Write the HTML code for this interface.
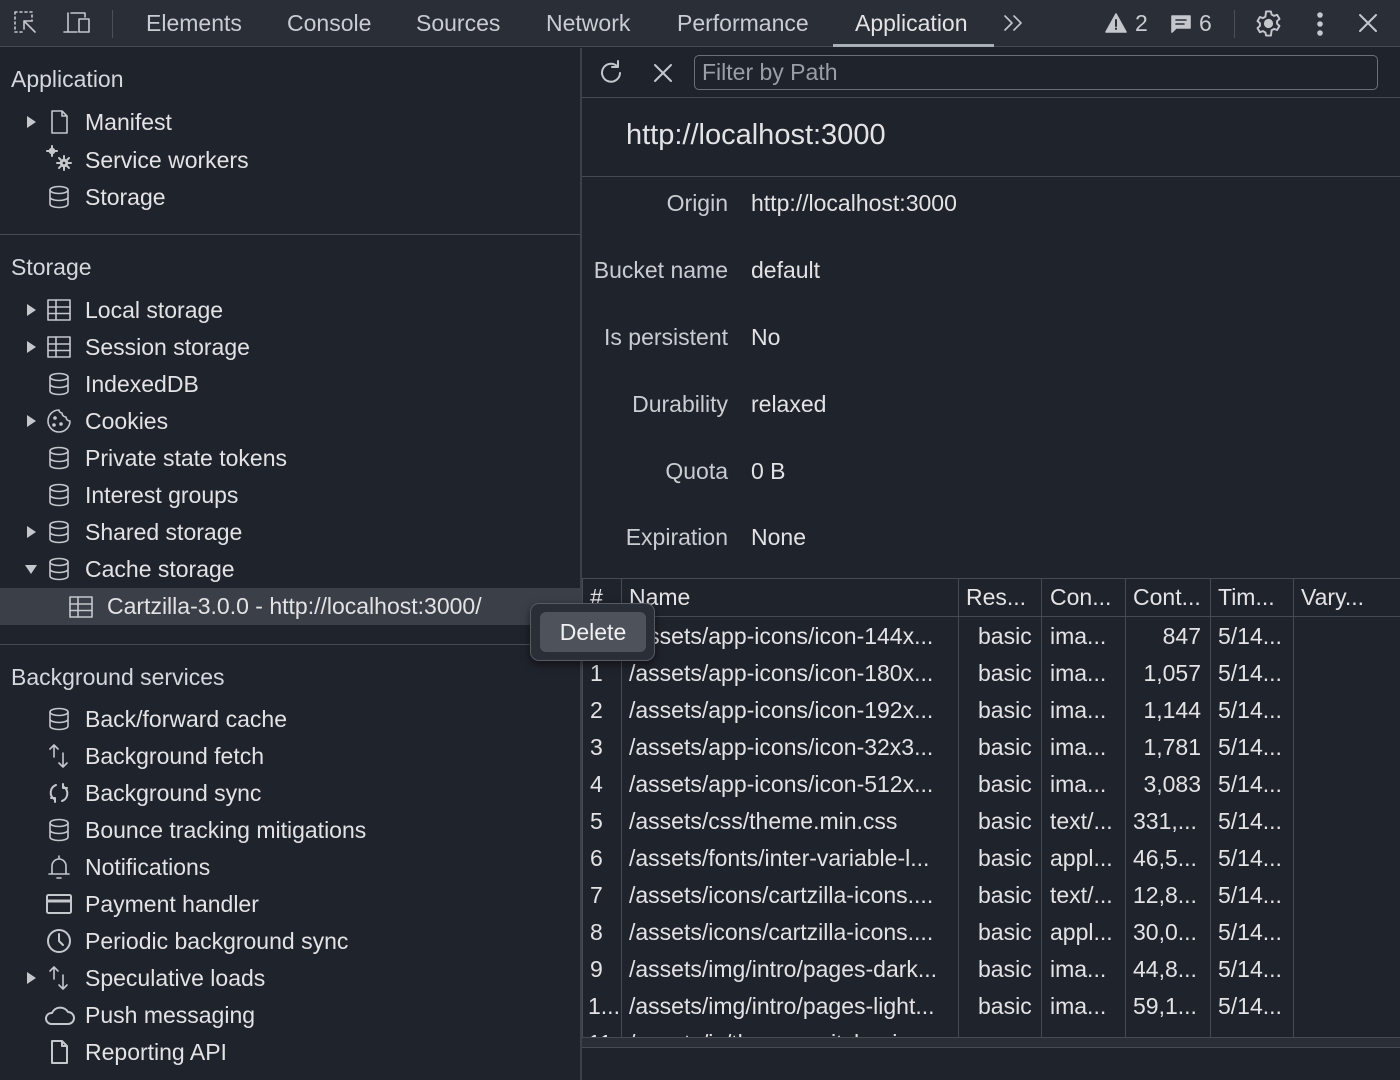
<!DOCTYPE html>
<html><head><meta charset="utf-8"><style>
*{box-sizing:border-box;margin:0;padding:0}
body{width:1400px;height:1080px;background:#1f232b;color:#e3e3e6;font-family:"Liberation Sans",sans-serif;font-size:23px;position:relative;overflow:hidden}
.a{position:absolute;white-space:nowrap}
svg{fill:none;stroke:#c4c7cc;stroke-width:1.6;stroke-linecap:round;stroke-linejoin:round}
.tb{position:absolute;left:0;top:0;width:1400px;height:47px;background:#2a2e37;border-bottom:1px solid #454a53}
.tab{position:absolute;top:0;height:47px;line-height:46px;color:#c9ccd1;white-space:nowrap}
.it{position:absolute;height:30px;line-height:30px;left:85px;white-space:nowrap}
.ic{position:absolute;left:46px;width:26px;height:26px}
.tri{position:absolute;left:27px;width:0;height:0;border-top:6px solid transparent;border-bottom:6px solid transparent;border-left:9px solid #c4c7cc}
.sec{position:absolute;left:11px;color:#d4d7dc;white-space:nowrap}
.hl{position:absolute;left:0;width:580px;height:1px;background:#454a53}
.k{position:absolute;right:672px;color:#c9ccd1;white-space:nowrap}
.v{position:absolute;left:751px;white-space:nowrap}
.vl{position:absolute;width:1px;background:#454a53}
.r{position:absolute;height:37px;line-height:37px;white-space:nowrap;overflow:hidden}
.n{width:325px}
</style></head><body>
<div class="tb"></div>
<svg class="a" style="left:12px;top:9px" width="28" height="28" viewBox="0 0 28 28"><path d="M3 3h2M8 3h2M13 3h2M18 3h2M3 3v2M3 8v2M3 13v2M3 18v2M3 23h2M8 23h2M20 6v2M20 11v1" /><path d="M12 12l11 11M12 12v8M12 12h8"/></svg>
<svg class="a" style="left:62px;top:9px" width="32" height="28" viewBox="0 0 32 28"><path d="M6 4v19M2 23h13M9 4h14v4M17 10h10v13h-10z"/></svg>
<div class="a" style="left:112px;top:10px;width:1px;height:28px;background:#4a4f58"></div>
<div class="tab" style="left:146px">Elements</div>
<div class="tab" style="left:287px">Console</div>
<div class="tab" style="left:416px">Sources</div>
<div class="tab" style="left:546px">Network</div>
<div class="tab" style="left:677px">Performance</div>
<div class="tab" style="left:855px;color:#e3e3e6">Application</div>
<div class="a" style="left:833px;top:44px;width:161px;height:3px;background:#aab0b8"></div>
<svg class="a" style="left:1002px;top:13px" width="24" height="20" viewBox="0 0 24 20"><path d="M3 3l7 7-7 7M12 3l7 7-7 7"/></svg>
<svg class="a" style="left:1104px;top:12px" width="24" height="22" viewBox="0 0 24 22"><path d="M12 2L22 20H2z" fill="#c4c7cc"/><path d="M12 8v6M12 16.5v.5" stroke="#2a2e37" stroke-width="2"/></svg>
<div class="tab" style="left:1135px">2</div>
<svg class="a" style="left:1170px;top:14px" width="22" height="20" viewBox="0 0 22 20"><path d="M2 2h18v12H6l-4 4z" fill="#c4c7cc"/><path d="M6 6h10M6 10h8" stroke="#2a2e37" stroke-width="1.6"/></svg>
<div class="tab" style="left:1199px">6</div>
<div class="a" style="left:1234px;top:10px;width:1px;height:28px;background:#4a4f58"></div>
<svg class="a" style="left:1254px;top:9px" width="29" height="29" viewBox="0 0 24 24"><circle cx="12" cy="12" r="3" fill="#c4c7cc"/><path d="M10 2h4l.6 2.6 2 1.1 2.5-.9 2 3.4-2 1.8v2.2l2 1.8-2 3.4-2.5-.9-2 1.1L14 22h-4l-.6-2.6-2-1.1-2.5.9-2-3.4 2-1.8v-2.2l-2-1.8 2-3.4 2.5.9 2-1.1z"/></svg>
<svg class="a" style="left:1310px;top:10px" width="20" height="28" viewBox="0 0 20 28"><circle cx="10" cy="5" r="2" fill="#c4c7cc"/><circle cx="10" cy="14" r="2" fill="#c4c7cc"/><circle cx="10" cy="23" r="2" fill="#c4c7cc"/></svg>
<svg class="a" style="left:1356px;top:11px" width="24" height="24" viewBox="0 0 24 24"><path d="M4 4l16 16M20 4L4 20" stroke-width="2"/></svg>

<!-- left -->
<div class="a" style="left:580px;top:48px;width:2px;height:1032px;background:#3c4049"></div>
<div class="sec" style="top:66px">Application</div>
<div class="tri" style="top:116px"></div>
<svg class="ic" style="top:109px" viewBox="0 0 26 26"><path d="M6 2h10l5 5v17H6z M16 2v5h5"/></svg>
<div class="it" style="top:107px">Manifest</div>
<svg class="ic" style="top:145px" viewBox="0 0 26 26"><circle cx="6" cy="6" r="2.5" fill="#c4c7cc"/><circle cx="18" cy="18" r="3.5" fill="#c4c7cc"/><circle cx="18" cy="18" r="1.3" fill="#1f232b" stroke="none"/><path d="M6 1v2M6 9v2M1 6h2M9 6h2M18 11v3M18 22v3M11 18h3M22 18h3M13 13l2 2M21 21l2 2M23 13l-2 2M13 23l2-2" stroke-width="2"/></svg>
<div class="it" style="top:145px">Service workers</div>
<svg class="ic" style="top:184px" viewBox="0 0 26 26"><ellipse cx="13" cy="6" rx="9" ry="3.5"/><path d="M4 6v14c0 2 4 3.5 9 3.5s9-1.5 9-3.5V6M4 13c0 2 4 3.5 9 3.5s9-1.5 9-3.5"/></svg>
<div class="it" style="top:182px">Storage</div>
<div class="hl" style="top:234px"></div>
<div class="sec" style="top:254px">Storage</div>

<div class="tri" style="top:304px"></div>
<svg class="ic" style="top:297px" viewBox="0 0 26 26"><rect x="2" y="3" width="22" height="20"/><path d="M2 10h22M2 16.5h22M10 3v20"/></svg>
<div class="it" style="top:295px">Local storage</div>
<div class="tri" style="top:341px"></div>
<svg class="ic" style="top:334px" viewBox="0 0 26 26"><rect x="2" y="3" width="22" height="20"/><path d="M2 10h22M2 16.5h22M10 3v20"/></svg>
<div class="it" style="top:332px">Session storage</div>
<svg class="ic" style="top:371px" viewBox="0 0 26 26"><ellipse cx="13" cy="6" rx="9" ry="3.5"/><path d="M4 6v14c0 2 4 3.5 9 3.5s9-1.5 9-3.5V6M4 13c0 2 4 3.5 9 3.5s9-1.5 9-3.5"/></svg>
<div class="it" style="top:369px">IndexedDB</div>
<div class="tri" style="top:415px"></div>
<svg class="ic" style="top:408px" viewBox="0 0 26 26"><path d="M13 2a11 11 0 1 0 11 11 4 4 0 0 1-4-4 4 4 0 0 1-4-4 3 3 0 0 1-3-3z"/><circle cx="9" cy="10" r="1" fill="#c4c7cc"/><circle cx="15" cy="16" r="1" fill="#c4c7cc"/><circle cx="8" cy="17" r="1" fill="#c4c7cc"/></svg>
<div class="it" style="top:406px">Cookies</div>
<svg class="ic" style="top:445px" viewBox="0 0 26 26"><ellipse cx="13" cy="6" rx="9" ry="3.5"/><path d="M4 6v14c0 2 4 3.5 9 3.5s9-1.5 9-3.5V6M4 13c0 2 4 3.5 9 3.5s9-1.5 9-3.5"/></svg>
<div class="it" style="top:443px">Private state tokens</div>
<svg class="ic" style="top:482px" viewBox="0 0 26 26"><ellipse cx="13" cy="6" rx="9" ry="3.5"/><path d="M4 6v14c0 2 4 3.5 9 3.5s9-1.5 9-3.5V6M4 13c0 2 4 3.5 9 3.5s9-1.5 9-3.5"/></svg>
<div class="it" style="top:480px">Interest groups</div>
<div class="tri" style="top:526px"></div>
<svg class="ic" style="top:519px" viewBox="0 0 26 26"><ellipse cx="13" cy="6" rx="9" ry="3.5"/><path d="M4 6v14c0 2 4 3.5 9 3.5s9-1.5 9-3.5V6M4 13c0 2 4 3.5 9 3.5s9-1.5 9-3.5"/></svg>
<div class="it" style="top:517px">Shared storage</div>
<div class="a" style="left:25px;top:565px;width:0;height:0;border-left:6px solid transparent;border-right:6px solid transparent;border-top:9px solid #c4c7cc"></div>
<svg class="ic" style="top:556px" viewBox="0 0 26 26"><ellipse cx="13" cy="6" rx="9" ry="3.5"/><path d="M4 6v14c0 2 4 3.5 9 3.5s9-1.5 9-3.5V6M4 13c0 2 4 3.5 9 3.5s9-1.5 9-3.5"/></svg>
<div class="it" style="top:554px">Cache storage</div>
<div class="a" style="left:0;top:588px;width:580px;height:37px;background:#3b3f47"></div>
<svg class="ic" style="top:594px;left:68px" viewBox="0 0 26 26"><rect x="2" y="3" width="22" height="20"/><path d="M2 10h22M2 16.5h22M10 3v20"/></svg>
<div class="it" style="top:591px;left:107px">Cartzilla-3.0.0 - http://localhost:3000/</div>
<div class="hl" style="top:644px"></div>
<div class="sec" style="top:664px">Background services</div>
<svg class="ic" style="top:706px" viewBox="0 0 26 26"><ellipse cx="13" cy="6" rx="9" ry="3.5"/><path d="M4 6v14c0 2 4 3.5 9 3.5s9-1.5 9-3.5V6M4 13c0 2 4 3.5 9 3.5s9-1.5 9-3.5"/></svg>
<div class="it" style="top:704px">Back/forward cache</div>
<svg class="ic" style="top:743px" viewBox="0 0 26 26"><path d="M8 2v12M4 6l4-4 4 4M17 10v14M13 20l4 4 4-4"/></svg>
<div class="it" style="top:741px">Background fetch</div>
<svg class="ic" style="top:780px" viewBox="0 0 26 26"><path d="M10 5a8 8 0 0 0-2 14M16 21a8 8 0 0 0 2-14M5 18h4v4M21 8h-4V4" stroke-width="2"/></svg>
<div class="it" style="top:778px">Background sync</div>
<svg class="ic" style="top:817px" viewBox="0 0 26 26"><ellipse cx="13" cy="6" rx="9" ry="3.5"/><path d="M4 6v14c0 2 4 3.5 9 3.5s9-1.5 9-3.5V6M4 13c0 2 4 3.5 9 3.5s9-1.5 9-3.5"/></svg>
<div class="it" style="top:815px">Bounce tracking mitigations</div>
<svg class="ic" style="top:854px" viewBox="0 0 26 26"><path d="M13 2v2M6 20V12a7 7 0 0 1 14 0v8M3 20h20M11 24h4"/></svg>
<div class="it" style="top:852px">Notifications</div>
<svg class="ic" style="top:891px" viewBox="0 0 26 26"><rect x="1" y="4" width="24" height="18" rx="1.5" stroke-width="2"/><path d="M1 10h24" stroke-width="3"/></svg>
<div class="it" style="top:889px">Payment handler</div>
<svg class="ic" style="top:928px" viewBox="0 0 26 26"><circle cx="13" cy="13" r="11" stroke-width="2"/><path d="M13 6v7l4 4" stroke-width="2"/></svg>
<div class="it" style="top:926px">Periodic background sync</div>
<div class="tri" style="top:972px"></div>
<svg class="ic" style="top:965px" viewBox="0 0 26 26"><path d="M8 2v12M4 6l4-4 4 4M17 10v14M13 20l4 4 4-4"/></svg>
<div class="it" style="top:963px">Speculative loads</div>
<svg class="ic" style="top:1002px;left:42px;width:34px" viewBox="0 0 34 26"><path d="M9 22h17a6 6 0 0 0 0-12 9 9 0 0 0-16 1 5.5 5.5 0 0 0-1 11z" stroke-width="2"/></svg>
<div class="it" style="top:1000px">Push messaging</div>
<svg class="ic" style="top:1039px" viewBox="0 0 26 26"><path d="M6 2h10l5 5v17H6z M16 2v5h5" stroke-width="2"/></svg>
<div class="it" style="top:1037px">Reporting API</div>

<!-- right -->
<svg class="a" style="left:597px;top:59px" width="28" height="28" viewBox="0 0 28 28"><path d="M23 14a9 9 0 1 1-3-7M21 2v6h-6" stroke-width="2"/></svg>
<svg class="a" style="left:652px;top:62px" width="22" height="22" viewBox="0 0 22 22"><path d="M3 3l16 16M19 3L3 19" stroke-width="2"/></svg>
<div class="a" style="left:694px;top:55px;width:684px;height:35px;border:1.5px solid #6a6f78;border-radius:5px;padding-left:7px;line-height:33px;color:#9a9ea5">Filter by Path</div>
<div class="a" style="left:582px;top:97px;width:818px;height:1px;background:#454a53"></div>
<div class="a" style="left:626px;top:119px;font-size:29px">http://localhost:3000</div>
<div class="a" style="left:582px;top:176px;width:818px;height:1px;background:#454a53"></div>
<div class="k" style="top:190px">Origin</div><div class="v" style="top:190px">http://localhost:3000</div>
<div class="k" style="top:257px">Bucket name</div><div class="v" style="top:257px">default</div>
<div class="k" style="top:324px">Is persistent</div><div class="v" style="top:324px">No</div>
<div class="k" style="top:391px">Durability</div><div class="v" style="top:391px">relaxed</div>
<div class="k" style="top:458px">Quota</div><div class="v" style="top:458px">0 B</div>
<div class="k" style="top:524px">Expiration</div><div class="v" style="top:524px">None</div>

<div class="a" style="left:582px;top:578px;width:818px;height:1px;background:#454a53"></div>
<div class="a" style="left:582px;top:616px;width:818px;height:1px;background:#454a53"></div>
<div class="vl" style="left:582px;top:578px;height:460px"></div>
<div class="vl" style="left:621px;top:578px;height:460px"></div>
<div class="vl" style="left:958px;top:578px;height:460px"></div>
<div class="vl" style="left:1041px;top:578px;height:460px"></div>
<div class="vl" style="left:1125px;top:578px;height:460px"></div>
<div class="vl" style="left:1210px;top:578px;height:460px"></div>
<div class="vl" style="left:1293px;top:578px;height:460px"></div>
<div class="a" style="left:582px;top:1037px;width:818px;height:11px;background:#2a2e37;border-top:1px solid #454a53;border-bottom:1px solid #454a53"></div>
<div class="r" style="top:579px;left:590px">#</div>
<div class="r" style="top:579px;left:629px">Name</div>
<div class="r" style="top:579px;left:966px">Res...</div>
<div class="r" style="top:579px;left:1050px">Con...</div>
<div class="r" style="top:579px;left:1133px">Cont...</div>
<div class="r" style="top:579px;left:1218px">Tim...</div>
<div class="r" style="top:579px;left:1301px">Vary...</div>

<div style="position:absolute;left:0;top:0;width:1400px;height:1037px;overflow:hidden">
<div class="r n" style="top:618px;left:629px">/assets/app-icons/icon-144x...</div>
<div class="r" style="top:655px;left:590px">1</div><div class="r n" style="top:655px;left:629px">/assets/app-icons/icon-180x...</div>
<div class="r" style="top:692px;left:590px">2</div><div class="r n" style="top:692px;left:629px">/assets/app-icons/icon-192x...</div>
<div class="r" style="top:729px;left:590px">3</div><div class="r n" style="top:729px;left:629px">/assets/app-icons/icon-32x3...</div>
<div class="r" style="top:766px;left:590px">4</div><div class="r n" style="top:766px;left:629px">/assets/app-icons/icon-512x...</div>
<div class="r" style="top:803px;left:590px">5</div><div class="r n" style="top:803px;left:629px">/assets/css/theme.min.css</div>
<div class="r" style="top:840px;left:590px">6</div><div class="r n" style="top:840px;left:629px">/assets/fonts/inter-variable-l...</div>
<div class="r" style="top:877px;left:590px">7</div><div class="r n" style="top:877px;left:629px">/assets/icons/cartzilla-icons....</div>
<div class="r" style="top:914px;left:590px">8</div><div class="r n" style="top:914px;left:629px">/assets/icons/cartzilla-icons....</div>
<div class="r" style="top:951px;left:590px">9</div><div class="r n" style="top:951px;left:629px">/assets/img/intro/pages-dark...</div>
<div class="r" style="top:988px;left:588px">1...</div><div class="r n" style="top:988px;left:629px">/assets/img/intro/pages-light...</div>
<div class="r" style="top:1025px;left:588px">11</div><div class="r n" style="top:1025px;left:629px">/assets/js/theme-switcher.js</div>
<div class="r" style="top:618px;left:978px">basic</div><div class="r" style="top:618px;left:1050px">ima...</div><div class="r" style="top:618px;left:1133px;width:68px;text-align:right">847</div><div class="r" style="top:618px;left:1218px">5/14...</div>
<div class="r" style="top:655px;left:978px">basic</div><div class="r" style="top:655px;left:1050px">ima...</div><div class="r" style="top:655px;left:1133px;width:68px;text-align:right">1,057</div><div class="r" style="top:655px;left:1218px">5/14...</div>
<div class="r" style="top:692px;left:978px">basic</div><div class="r" style="top:692px;left:1050px">ima...</div><div class="r" style="top:692px;left:1133px;width:68px;text-align:right">1,144</div><div class="r" style="top:692px;left:1218px">5/14...</div>
<div class="r" style="top:729px;left:978px">basic</div><div class="r" style="top:729px;left:1050px">ima...</div><div class="r" style="top:729px;left:1133px;width:68px;text-align:right">1,781</div><div class="r" style="top:729px;left:1218px">5/14...</div>
<div class="r" style="top:766px;left:978px">basic</div><div class="r" style="top:766px;left:1050px">ima...</div><div class="r" style="top:766px;left:1133px;width:68px;text-align:right">3,083</div><div class="r" style="top:766px;left:1218px">5/14...</div>
<div class="r" style="top:803px;left:978px">basic</div><div class="r" style="top:803px;left:1050px">text/...</div><div class="r" style="top:803px;left:1133px">331,...</div><div class="r" style="top:803px;left:1218px">5/14...</div>
<div class="r" style="top:840px;left:978px">basic</div><div class="r" style="top:840px;left:1050px">appl...</div><div class="r" style="top:840px;left:1133px">46,5...</div><div class="r" style="top:840px;left:1218px">5/14...</div>
<div class="r" style="top:877px;left:978px">basic</div><div class="r" style="top:877px;left:1050px">text/...</div><div class="r" style="top:877px;left:1133px">12,8...</div><div class="r" style="top:877px;left:1218px">5/14...</div>
<div class="r" style="top:914px;left:978px">basic</div><div class="r" style="top:914px;left:1050px">appl...</div><div class="r" style="top:914px;left:1133px">30,0...</div><div class="r" style="top:914px;left:1218px">5/14...</div>
<div class="r" style="top:951px;left:978px">basic</div><div class="r" style="top:951px;left:1050px">ima...</div><div class="r" style="top:951px;left:1133px">44,8...</div><div class="r" style="top:951px;left:1218px">5/14...</div>
<div class="r" style="top:988px;left:978px">basic</div><div class="r" style="top:988px;left:1050px">ima...</div><div class="r" style="top:988px;left:1133px">59,1...</div><div class="r" style="top:988px;left:1218px">5/14...</div>
</div>

<!-- context menu -->
<div class="a" style="left:530px;top:603px;width:125px;height:58px;background:#2a2e37;border:1px solid #555a63;border-radius:9px;box-shadow:0 3px 8px rgba(0,0,0,.5)"></div>
<div class="a" style="left:540px;top:612px;width:106px;height:40px;background:#4d525b;border-radius:6px;line-height:40px;text-align:center;color:#f0f0f2">Delete</div>
</body></html>
